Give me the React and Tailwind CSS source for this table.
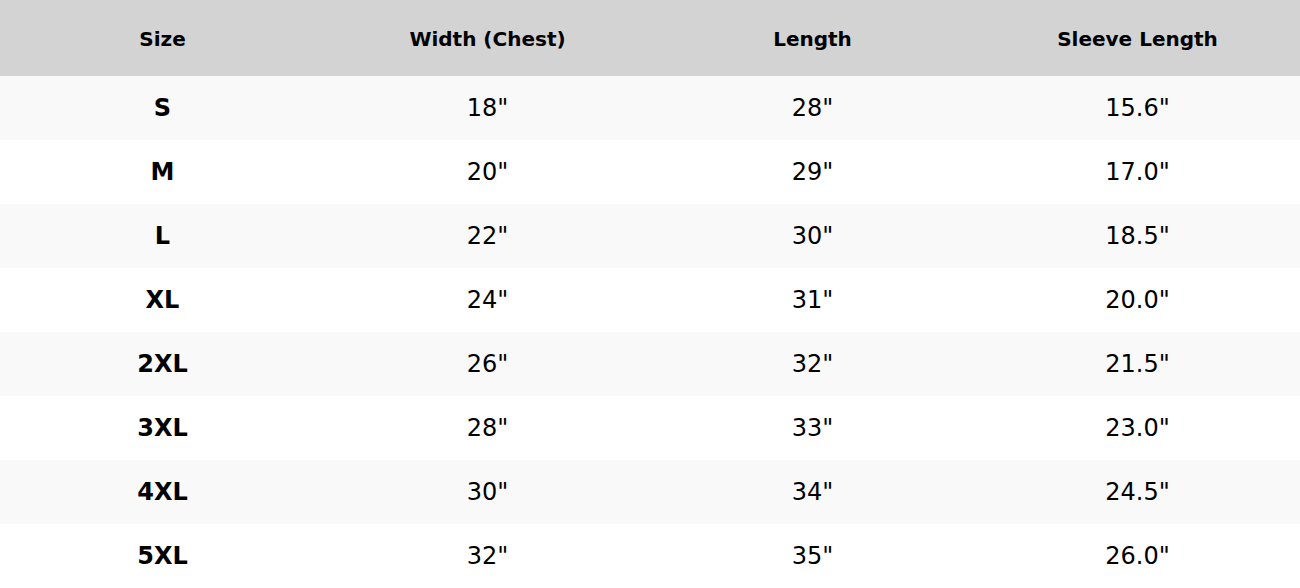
const headers = ["Size", "Width (Chest)", "Length", "Sleeve Length"];

const rows = [
    ["S", '18"', '28"', '15.6"'],
    ["M", '20"', '29"', '17.0"'],
    ["L", '22"', '30"', '18.5"'],
    ["XL", '24"', '31"', '20.0"'],
    ["2XL", '26"', '32"', '21.5"'],
    ["3XL", '28"', '33"', '23.0"'],
    ["4XL", '30"', '34"', '24.5"'],
    ["5XL", '32"', '35"', '26.0"'],
];

export default function App() {
    return (
        <div className="w-[1300px] bg-white text-black font-['DejaVu_Sans',sans-serif]">
            <div className="grid grid-cols-4 h-[76px] bg-[#d3d3d3] items-center">
                {headers.map((h) => (
                    <div key={h} className="text-center text-[20px] leading-none font-bold pt-[1px]">
                        {h}
                    </div>
                ))}
            </div>
            {rows.map((r, i) => (
                <div
                    key={r[0]}
                    className={`grid grid-cols-4 h-16 items-center ${i % 2 === 0 ? "bg-[#f9f9f9]" : "bg-white"}`}
                >
                    {r.map((c, j) => (
                        <div key={j} className={`text-center text-[24px] leading-none ${j === 0 ? "font-bold" : ""}`}>
                            {c}
                        </div>
                    ))}
                </div>
            ))}
        </div>
    );
}
